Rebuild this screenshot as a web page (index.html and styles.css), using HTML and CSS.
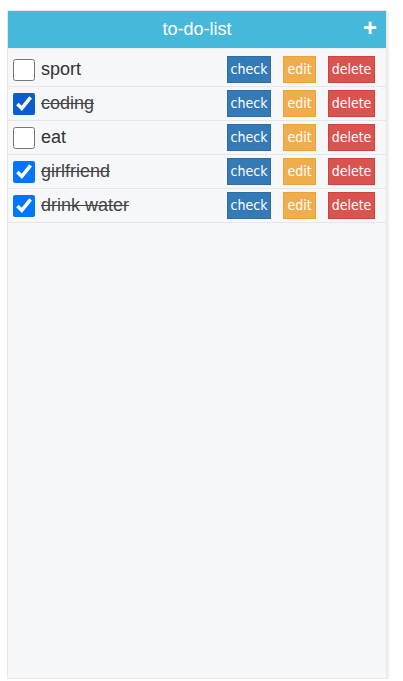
FILE: index.html
```html
<!DOCTYPE html>
<html>
<head>
<meta charset="utf-8">
<link rel="stylesheet" href="styles.css">
</head>
<body>
<div class="panel">
  <div class="header">
    <span class="title">to-do-list</span>
    <span class="add">+</span>
  </div>
  <ul class="list">
    <li class="item">
      <input type="checkbox" class="box">
      <span class="label">sport</span>
      <div class="actions"><button class="btn check">check</button><button class="btn edit">edit</button><button class="btn delete">delete</button></div>
    </li>
    <li class="item done">
      <input type="checkbox" class="box box-focus" checked>
      <span class="label">coding</span>
      <div class="actions"><button class="btn check">check</button><button class="btn edit">edit</button><button class="btn delete">delete</button></div>
    </li>
    <li class="item">
      <input type="checkbox" class="box">
      <span class="label">eat</span>
      <div class="actions"><button class="btn check">check</button><button class="btn edit">edit</button><button class="btn delete">delete</button></div>
    </li>
    <li class="item done">
      <input type="checkbox" class="box" checked>
      <span class="label">girlfriend</span>
      <div class="actions"><button class="btn check">check</button><button class="btn edit">edit</button><button class="btn delete">delete</button></div>
    </li>
    <li class="item done">
      <input type="checkbox" class="box" checked>
      <span class="label">drink water</span>
      <div class="actions"><button class="btn check">check</button><button class="btn edit">edit</button><button class="btn delete">delete</button></div>
    </li>
  </ul>
</div>
</body>
</html>
```
FILE: styles.css
```css
html, body {
  margin: 0;
  padding: 0;
  background: #ffffff;
  font-family: "Liberation Sans", Arial, sans-serif;
}
.panel {
  box-sizing: border-box;
  margin: 10px 0 0 7px;
  width: 380px;
  height: 669px;
  background: #f5f7f9;
  border: 1px solid #e6e8ea;
  box-shadow: 2px 2px 2px rgba(0, 0, 0, 0.07);
}
.header {
  position: relative;
  height: 37px;
  background: #46b8da;
  display: flex;
  align-items: center;
  justify-content: center;
}
.title {
  color: #ffffff;
  font-size: 18px;
}
.add {
  position: absolute;
  right: 9px;
  top: 5px;
  color: #ffffff;
  font-size: 24px;
  font-weight: bold;
  line-height: 24px;
}
.list {
  list-style: none;
  margin: 0;
  padding: 4px 0 0 0;
  border-top: 1px solid #eceef0;
}
.item {
  display: flex;
  align-items: center;
  height: 33px;
  border-bottom: 1px solid #e4e6e9;
}
.box {
  width: 22px;
  height: 22px;
  margin: 0 6px 0 5px;
}
.box-focus {
  accent-color: #0b5cd0;
}
.label {
  font-size: 18px;
  color: #333333;
}
.done .label {
  text-decoration: line-through;
  color: #444444;
}
.actions {
  margin-left: auto;
  margin-right: 11px;
  display: flex;
  gap: 12px;
}
.btn {
  height: 27px;
  padding: 0;
  border: 1px solid transparent;
  border-radius: 0;
  color: #ffffff;
  font-family: "DejaVu Sans Condensed", "DejaVu Sans", sans-serif;
  font-stretch: condensed;
  font-size: 14px;
  line-height: 25px;
}
.check {
  width: 44px;
  background: #337ab7;
  border-color: #2e6da4;
}
.edit {
  width: 33px;
  background: #f0ad4e;
  border-color: #eea236;
}
.delete {
  width: 47px;
  background: #d9534f;
  border-color: #d43f3a;
}
```
